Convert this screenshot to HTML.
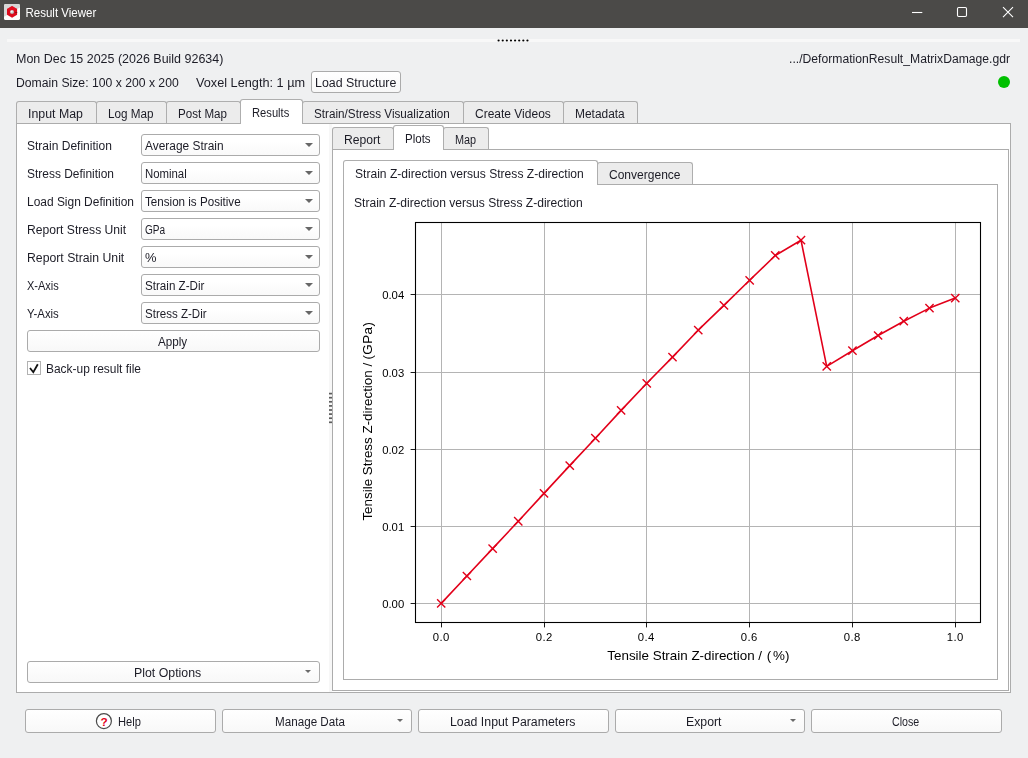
<!DOCTYPE html>
<html><head><meta charset="utf-8"><title>Result Viewer</title>
<style>
*{box-sizing:border-box;margin:0;padding:0}
html,body{width:1028px;height:758px;overflow:hidden;background:#eff0f1;font-family:"Liberation Sans",sans-serif;font-size:13px;color:#1c1c26}
.abs,.combo,.tab,.btn,.pane,.t{position:absolute}
.t{white-space:nowrap;line-height:16px;z-index:5;transform-origin:0 0}
#titlebar{position:absolute;left:0;top:0;width:1028px;height:28px;background:#4b4a48}
.combo{height:22px;border:1px solid #ababab;border-radius:3px;background:linear-gradient(#fff 30%,#f9f9f9)}
.arr{position:absolute;left:163px;top:8px;width:0;height:0;border-left:4px solid transparent;border-right:4px solid transparent;border-top:4px solid #676767}
.sarr{position:absolute;width:0;height:0;border-left:3px solid transparent;border-right:3px solid transparent;border-top:3px solid #6a6a6a}
.pane{background:#fff;border:1px solid #acacac}
.tab{border:1px solid #aeaeae;border-bottom:none;background:#ececec;border-radius:3px 3px 0 0}
.tab.sel{background:#fff;z-index:3}
.btn{border:1px solid #ababab;border-radius:3px;background:linear-gradient(#ffffff,#f8f8f8)}
</style></head><body>
<div id="titlebar">
<svg class="abs" style="left:4px;top:4px" width="16" height="16" viewBox="0 0 16 16"><defs><clipPath id="ic"><rect x="0" y="0" width="16" height="16" rx="1.6"/></clipPath><radialGradient id="ball" cx="0.4" cy="0.35" r="0.7"><stop offset="0" stop-color="#fff"/><stop offset="1" stop-color="#9a9a9a"/></radialGradient></defs><g clip-path="url(#ic)"><rect width="16" height="16" fill="#fdfdfd"/><polygon points="0,0 16,0 16,3.6 0,12.8" fill="#d6d6d6"/></g><polygon points="8.05,2 13.1,5 13.1,10.8 8.05,13.8 3,10.8 3,5" fill="#dc0a1c"/><polygon points="8.05,2 13.1,5 8.05,8 3,5" fill="#e81224" opacity="0.6"/><path d="M11.2 8.1h2v0.9h-2z" fill="#7a1016"/><circle cx="8.05" cy="8.05" r="2.05" fill="url(#ball)"/></svg>
<svg class="abs" style="left:0;top:0;filter:grayscale(1)" width="200" height="28"><text x="25.4" y="17" font-family="Liberation Sans, sans-serif" font-size="12.2" fill="#fff" textLength="71" lengthAdjust="spacingAndGlyphs">Result Viewer</text></svg>
<svg class="abs" style="left:900px;top:0" width="128" height="28" viewBox="0 0 128 28" fill="none" stroke="#fff" stroke-width="1.1"><path d="M12 12.5H22.3"/><rect x="57.5" y="7.5" width="9" height="9" rx="1.2"/><path d="M103 7.2L113 17.2M113 7.2L103 17.2"/></svg>
</div>
<div class="abs" style="left:7px;top:39px;width:1013px;height:3px;background:#f8f8f8"></div>
<svg class="abs" style="left:490px;top:35px" width="50" height="12" fill="#000"><circle cx="8.60" cy="5.5" r="1.1"/><circle cx="12.72" cy="5.5" r="1.1"/><circle cx="16.84" cy="5.5" r="1.1"/><circle cx="20.96" cy="5.5" r="1.1"/><circle cx="25.08" cy="5.5" r="1.1"/><circle cx="29.20" cy="5.5" r="1.1"/><circle cx="33.32" cy="5.5" r="1.1"/><circle cx="37.44" cy="5.5" r="1.1"/></svg>
<div class="t" style="left:16.00px;top:51px;font-size:12.5px;transform:scaleX(0.9980);">Mon Dec 15 2025 (2026 Build 92634)</div>
<div class="t" style="left:789.30px;top:51px;font-size:12.5px;transform:scaleX(0.9731);">.../DeformationResult_MatrixDamage.gdr</div>
<div class="t" style="left:16.00px;top:75px;font-size:12.5px;transform:scaleX(0.9757);">Domain Size: 100 x 200 x 200</div>
<div class="t" style="left:195.80px;top:75px;font-size:12.5px;transform:scaleX(1.0168);">Voxel Length: 1 µm</div>
<div class="t" style="left:314.90px;top:75px;font-size:12.5px;transform:scaleX(0.9917);">Load Structure</div>

<div class="btn" style="left:311px;top:71px;width:90px;height:22px"></div>
<div class="abs" style="left:998px;top:76px;width:12px;height:12px;border-radius:50%;background:#00c000"></div>

<!-- outer tabs -->
<div class="pane" style="left:16px;top:123px;width:995px;height:570px"></div>
<div class="tab" style="left:16px;top:101px;width:81px;height:22px"></div>
<div class="tab" style="left:96px;top:101px;width:71px;height:22px"></div>
<div class="tab" style="left:166px;top:101px;width:75px;height:22px"></div>
<div class="tab sel" style="left:240px;top:99px;width:63px;height:25px"></div>
<div class="tab" style="left:302px;top:101px;width:162px;height:22px"></div>
<div class="tab" style="left:463px;top:101px;width:101px;height:22px"></div>
<div class="tab" style="left:563px;top:101px;width:75px;height:22px"></div>

<div class="combo" style="left:141px;top:134px;width:179px;"><i class="arr"></i></div>
<div class="t" style="left:26.80px;top:138px;font-size:12.5px;transform:scaleX(0.9612);">Strain Definition</div>
<div class="t" style="left:145.00px;top:138px;font-size:12.5px;transform:scaleX(0.9533);">Average Strain</div>
<div class="combo" style="left:141px;top:162px;width:179px;"><i class="arr"></i></div>
<div class="t" style="left:26.80px;top:166px;font-size:12.5px;transform:scaleX(0.9561);">Stress Definition</div>
<div class="t" style="left:145.00px;top:166px;font-size:12.5px;transform:scaleX(0.9100);">Nominal</div>
<div class="combo" style="left:141px;top:190px;width:179px;"><i class="arr"></i></div>
<div class="t" style="left:26.80px;top:194px;font-size:12.5px;transform:scaleX(0.9556);">Load Sign Definition</div>
<div class="t" style="left:145.00px;top:194px;font-size:12.5px;transform:scaleX(0.9298);">Tension is Positive</div>
<div class="combo" style="left:141px;top:218px;width:179px;"><i class="arr"></i></div>
<div class="t" style="left:26.80px;top:222px;font-size:12.5px;transform:scaleX(0.9711);">Report Stress Unit</div>
<div class="t" style="left:145.00px;top:222px;font-size:12.5px;transform:scaleX(0.8060);">GPa</div>
<div class="combo" style="left:141px;top:246px;width:179px;"><i class="arr"></i></div>
<div class="t" style="left:26.80px;top:250px;font-size:12.5px;transform:scaleX(0.9791);">Report Strain Unit</div>
<div class="t" style="left:145.00px;top:250px;font-size:12.5px;transform:scaleX(1.0337);">%</div>
<div class="combo" style="left:141px;top:274px;width:179px;"><i class="arr"></i></div>
<div class="t" style="left:26.80px;top:278px;font-size:12.5px;transform:scaleX(0.8805);">X-Axis</div>
<div class="t" style="left:145.00px;top:278px;font-size:12.5px;transform:scaleX(0.9293);">Strain Z-Dir</div>
<div class="combo" style="left:141px;top:302px;width:179px;"><i class="arr"></i></div>
<div class="t" style="left:26.80px;top:306px;font-size:12.5px;transform:scaleX(0.9094);">Y-Axis</div>
<div class="t" style="left:145.00px;top:306px;font-size:12.5px;transform:scaleX(0.9237);">Stress Z-Dir</div>

<div class="btn" style="left:27px;top:330px;width:293px;height:22px"></div>
<div class="abs" style="left:27px;top:361px;width:14px;height:14px;border:1px solid #b2b2b2;background:#fff"></div>
<svg class="abs" style="left:27px;top:361px" width="14" height="14" viewBox="0 0 14 14" fill="none" stroke="#111" stroke-width="1.8"><path d="M3 7L6.3 11.2L10.8 3.2"/></svg>
<div class="btn" style="left:27px;top:661px;width:293px;height:22px"></div><i class="sarr" style="left:305px;top:670px"></i>

<!-- splitter handle -->
<div class="abs" style="left:329px;top:124px;width:3px;height:568px;background:#f7f7f7"></div>
<svg class="abs" style="left:329px;top:390px" width="3" height="40" fill="#5c5c5c"><rect x="0" y="2.75" width="3" height="1.7"/><rect x="0" y="6.85" width="3" height="1.7"/><rect x="0" y="10.95" width="3" height="1.7"/><rect x="0" y="15.05" width="3" height="1.7"/><rect x="0" y="19.15" width="3" height="1.7"/><rect x="0" y="23.25" width="3" height="1.7"/><rect x="0" y="27.35" width="3" height="1.7"/><rect x="0" y="31.45" width="3" height="1.7"/></svg>

<!-- inner tabs -->
<div class="pane" style="left:332px;top:149px;width:677px;height:542px"></div>
<div class="tab" style="left:332px;top:127px;width:62px;height:22px"></div>
<div class="tab sel" style="left:393px;top:125px;width:51px;height:25px"></div>
<div class="tab" style="left:443px;top:127px;width:46px;height:22px"></div>

<div class="pane" style="left:343px;top:184px;width:655px;height:496px"></div>
<div class="tab sel" style="left:343px;top:160px;width:255px;height:25px"></div>
<div class="tab" style="left:597px;top:162px;width:96px;height:22px"></div>
<div class="t" style="left:27.90px;top:106px;font-size:12.5px;transform:scaleX(0.9878);">Input Map</div>
<div class="t" style="left:107.70px;top:106px;font-size:12.5px;transform:scaleX(0.9356);">Log Map</div>
<div class="t" style="left:178.00px;top:106px;font-size:12.5px;transform:scaleX(0.9263);">Post Map</div>
<div class="t" style="left:251.90px;top:105px;font-size:12.5px;transform:scaleX(0.8949);">Results</div>
<div class="t" style="left:313.80px;top:106px;font-size:12.5px;transform:scaleX(0.9368);">Strain/Stress Visualization</div>
<div class="t" style="left:474.90px;top:106px;font-size:12.5px;transform:scaleX(0.9596);">Create Videos</div>
<div class="t" style="left:574.80px;top:106px;font-size:12.5px;transform:scaleX(0.9546);">Metadata</div>
<div class="t" style="left:344.00px;top:132px;font-size:12.5px;transform:scaleX(0.9721);">Report</div>
<div class="t" style="left:405.00px;top:131px;font-size:12.5px;transform:scaleX(0.9212);">Plots</div>
<div class="t" style="left:454.80px;top:132px;font-size:12.5px;transform:scaleX(0.8682);">Map</div>
<div class="t" style="left:354.90px;top:166px;font-size:12.5px;transform:scaleX(0.9659);">Strain Z-direction versus Stress Z-direction</div>
<div class="t" style="left:608.70px;top:167px;font-size:12.5px;transform:scaleX(0.9618);">Convergence</div>
<div class="t" style="left:353.80px;top:195px;font-size:12.5px;transform:scaleX(0.9659);">Strain Z-direction versus Stress Z-direction</div>
<div class="t" style="left:157.80px;top:334px;font-size:12.5px;transform:scaleX(0.9338);">Apply</div>
<div class="t" style="left:45.80px;top:361px;font-size:12.5px;transform:scaleX(0.9564);">Back-up result file</div>
<div class="t" style="left:133.70px;top:665px;font-size:12.5px;transform:scaleX(0.9869);">Plot Options</div>
<div class="t" style="left:117.90px;top:714px;font-size:12.5px;transform:scaleX(0.8912);">Help</div>
<div class="t" style="left:274.70px;top:714px;font-size:12.5px;transform:scaleX(0.9321);">Manage Data</div>
<div class="t" style="left:450.40px;top:714px;font-size:12.5px;transform:scaleX(0.9861);">Load Input Parameters</div>
<div class="t" style="left:686.10px;top:714px;font-size:12.5px;transform:scaleX(0.9819);">Export</div>
<div class="t" style="left:891.70px;top:714px;font-size:12.5px;transform:scaleX(0.8515);">Close</div>


<svg class="abs" style="left:0;top:0;z-index:6" width="1028" height="758" viewBox="0 0 1028 758" font-family="Liberation Sans, sans-serif" font-size="11.3" fill="#000">
<g stroke="#b4b4b4" stroke-width="1"><line x1="441.5" y1="222.5" x2="441.5" y2="622.5"/><line x1="544.5" y1="222.5" x2="544.5" y2="622.5"/><line x1="646.5" y1="222.5" x2="646.5" y2="622.5"/><line x1="749.5" y1="222.5" x2="749.5" y2="622.5"/><line x1="852.5" y1="222.5" x2="852.5" y2="622.5"/><line x1="955.5" y1="222.5" x2="955.5" y2="622.5"/><line x1="415.5" y1="603.5" x2="980.5" y2="603.5"/><line x1="415.5" y1="526.5" x2="980.5" y2="526.5"/><line x1="415.5" y1="449.5" x2="980.5" y2="449.5"/><line x1="415.5" y1="372.5" x2="980.5" y2="372.5"/><line x1="415.5" y1="294.5" x2="980.5" y2="294.5"/></g>
<g stroke="#e2001a" stroke-width="1.6" fill="none" stroke-linejoin="round"><polyline points="441.2,603.4 466.9,576.0 492.6,548.6 518.3,521.2 544.0,493.4 569.7,465.6 595.4,438.2 621.1,410.4 646.8,383.3 672.5,357.1 698.2,330.2 723.9,305.4 749.6,280.3 775.3,255.5 801.0,240.2 826.7,366.4 852.4,350.7 878.1,335.5 903.8,321.2 929.5,308.1 955.2,298.1"/></g>
<g stroke="#e2001a" stroke-width="1.4" fill="none"><path d="M437.1 599.2L445.3 607.5M437.1 607.5L445.3 599.2"/><path d="M462.8 571.9L471.0 580.1M462.8 580.1L471.0 571.9"/><path d="M488.5 544.5L496.8 552.8M488.5 552.8L496.8 544.5"/><path d="M514.1 517.1L522.4 525.4M514.1 525.4L522.4 517.1"/><path d="M539.9 489.2L548.1 497.5M539.9 497.5L548.1 489.2"/><path d="M565.6 461.5L573.9 469.8M565.6 469.8L573.9 461.5"/><path d="M591.2 434.1L599.5 442.3M591.2 442.3L599.5 434.1"/><path d="M617.0 406.2L625.2 414.5M617.0 414.5L625.2 406.2"/><path d="M642.6 379.2L650.9 387.4M642.6 387.4L650.9 379.2"/><path d="M668.4 353.0L676.6 361.2M668.4 361.2L676.6 353.0"/><path d="M694.1 326.1L702.4 334.3M694.1 334.3L702.4 326.1"/><path d="M719.8 301.2L728.1 309.5M719.8 309.5L728.1 301.2"/><path d="M745.5 276.2L753.8 284.4M745.5 284.4L753.8 276.2"/><path d="M771.1 251.3L779.4 259.6M771.1 259.6L779.4 251.3"/><path d="M796.9 236.0L805.1 244.3M796.9 244.3L805.1 236.0"/><path d="M822.6 362.2L830.9 370.5M822.6 370.5L830.9 362.2"/><path d="M848.3 346.6L856.6 354.8M848.3 354.8L856.6 346.6"/><path d="M874.0 331.4L882.2 339.6M874.0 339.6L882.2 331.4"/><path d="M899.6 317.1L907.9 325.3M899.6 325.3L907.9 317.1"/><path d="M925.4 304.0L933.6 312.2M925.4 312.2L933.6 304.0"/><path d="M951.1 294.0L959.4 302.2M951.1 302.2L959.4 294.0"/></g>
<rect x="415.5" y="222.5" width="565" height="400" fill="none" stroke="#000" stroke-width="1.1"/>
<g stroke="#000" stroke-width="0.9"><line x1="441.5" y1="622.5" x2="441.5" y2="627.4"/><line x1="544.5" y1="622.5" x2="544.5" y2="627.4"/><line x1="646.5" y1="622.5" x2="646.5" y2="627.4"/><line x1="749.5" y1="622.5" x2="749.5" y2="627.4"/><line x1="852.5" y1="622.5" x2="852.5" y2="627.4"/><line x1="955.5" y1="622.5" x2="955.5" y2="627.4"/><line x1="410.6" y1="603.5" x2="415.5" y2="603.5"/><line x1="410.6" y1="526.5" x2="415.5" y2="526.5"/><line x1="410.6" y1="449.5" x2="415.5" y2="449.5"/><line x1="410.6" y1="372.5" x2="415.5" y2="372.5"/><line x1="410.6" y1="294.5" x2="415.5" y2="294.5"/></g>
<g style="filter:grayscale(1)"><text x="441.3" y="641" text-anchor="middle" letter-spacing="0.5">0.0</text><text x="544.3" y="641" text-anchor="middle" letter-spacing="0.5">0.2</text><text x="646.3" y="641" text-anchor="middle" letter-spacing="0.5">0.4</text><text x="749.3" y="641" text-anchor="middle" letter-spacing="0.5">0.6</text><text x="852.3" y="641" text-anchor="middle" letter-spacing="0.5">0.8</text><text x="955.3" y="641" text-anchor="middle" letter-spacing="0.5">1.0</text><text x="404.2" y="607.6" text-anchor="end">0.00</text><text x="404.2" y="530.6" text-anchor="end">0.01</text><text x="404.2" y="453.6" text-anchor="end">0.02</text><text x="404.2" y="376.6" text-anchor="end">0.03</text><text x="404.2" y="298.6" text-anchor="end">0.04</text>
<text x="607.3" y="659.6" font-size="13.4">Tensile Strain Z-direction / <tspan dx="0.8">(</tspan><tspan dx="1.9">%</tspan>)</text>
<text transform="translate(372.0,520.6) rotate(-90)" font-size="13.4">Tensile Stress Z-direction /<tspan dx="3.3" letter-spacing="0.42">(GPa)</tspan></text></g>
</svg>

<!-- bottom buttons -->
<div class="btn" style="left:25px;top:709px;width:191px;height:24px"></div>
<svg class="abs" style="left:95px;top:712px;z-index:6" width="18" height="18" viewBox="0 0 18 18"><circle cx="8.9" cy="9.1" r="7.5" fill="#fff" stroke="#4a4a4a" stroke-width="1.2"/><text x="9.1" y="13.5" text-anchor="middle" font-family="Liberation Sans, sans-serif" font-weight="bold" font-size="11.8" fill="#e2001a">?</text></svg>
<div class="btn" style="left:222px;top:709px;width:190px;height:24px"></div><i class="sarr" style="left:397px;top:719px"></i>
<div class="btn" style="left:418px;top:709px;width:191px;height:24px"></div>
<div class="btn" style="left:615px;top:709px;width:190px;height:24px"></div><i class="sarr" style="left:790px;top:719px"></i>
<div class="btn" style="left:811px;top:709px;width:191px;height:24px"></div>
</body></html>
